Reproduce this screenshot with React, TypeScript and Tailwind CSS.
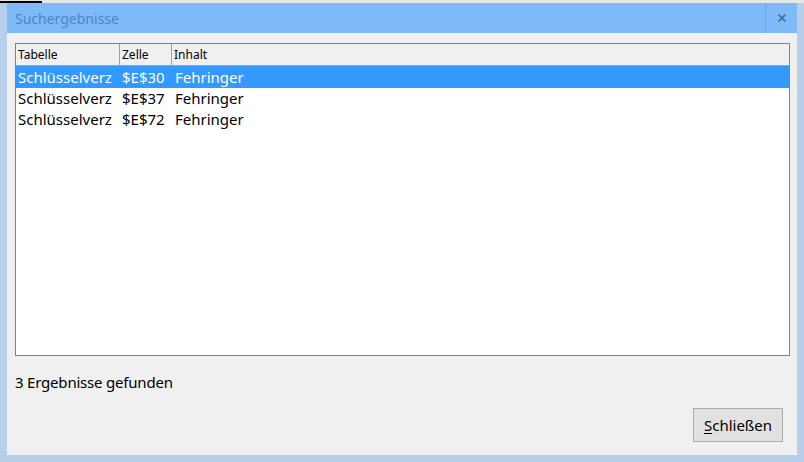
import { X } from "lucide-react"

// only the visible part of the sheet name is shown in the reference
const rows = [
  { table: "Schlüsselverz", cell: "$E$30", content: "Fehringer" },
  { table: "Schlüsselverz", cell: "$E$37", content: "Fehringer" },
  { table: "Schlüsselverz", cell: "$E$72", content: "Fehringer" },
]

const App = () => {
  return (
    <div className="w-[804px] h-[462px] flex flex-col bg-[#b7cfe9] font-['Noto_Sans',sans-serif] overflow-hidden">
      {/* strip of the sheet behind */}
      <div className="h-[3px] flex bg-[#e6e6e6]">
        <div className="w-[42px] h-[2px] mt-px bg-black" />
      </div>

      <div className="flex-1 flex flex-col mx-[7px] mb-[7px]">
        {/* Title bar */}
        <div className="h-[30px] flex items-center bg-[#80b9f8]">
          <span className="flex-1 pl-[8px] text-[14px] text-[#4f86c4]">Suchergebnisse</span>
          <div className="w-[32px] h-full flex items-center justify-center border-l border-[#6ea4e2]">
            <X size={12} strokeWidth={3.5} className="text-[#3f6d9e]" />
          </div>
        </div>

        {/* Body */}
        <div className="flex-1 flex flex-col bg-[#f0f0f0] px-[8px] pt-[10px] pb-[13px]">
          <div className="h-[313px] mr-[-1px] border border-[#828282] bg-white flex flex-col">
            <div className="h-[22px] flex bg-[#f0f0f0] border-b border-[#a0a0a0] text-[12px] text-black">
              <div className="w-[104px] pl-[2px] flex items-center border-r border-[#a0a0a0]">Tabelle</div>
              <div className="w-[52px] pl-[2px] flex items-center border-r border-[#a0a0a0]">Zelle</div>
              <div className="flex-1 pl-[2px] flex items-center">Inhalt</div>
            </div>
            {rows.map((r, i) => (
              <div
                key={r.cell}
                className={
                  i === 0
                    ? "h-[22px] flex items-center text-[15px] bg-[#3399ff] text-white"
                    : "h-[21px] flex items-center text-[15px] text-black"
                }
              >
                <div className="w-[104px] pl-[2px] whitespace-nowrap">{r.table}</div>
                <div className="w-[53px] pl-[2px] whitespace-nowrap">{r.cell}</div>
                <div className="flex-1 pl-[2px]">{r.content}</div>
              </div>
            ))}
          </div>

          <p className="mt-[15px] text-[15px] tracking-[-0.2px] text-black">3 Ergebnisse gefunden</p>

          <div className="flex-1" />

          <div className="flex justify-end pr-[6px]">
            <button className="w-[90px] h-[34px] bg-[#e1e1e1] border border-[#adadad] text-[15px] text-black">
              <span className="underline underline-offset-2">S</span>chließen
            </button>
          </div>
        </div>
      </div>
    </div>
  )
}

export default App
